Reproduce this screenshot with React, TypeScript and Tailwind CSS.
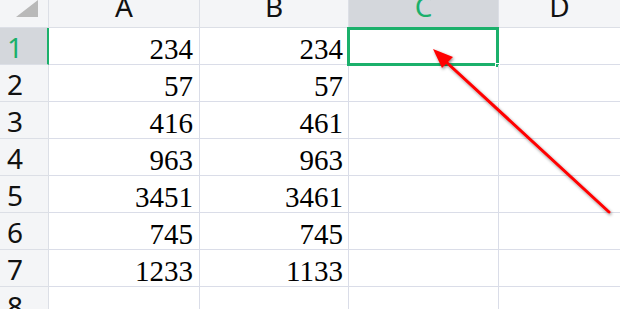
import React from "react";

const colA = ["234", "57", "416", "963", "3451", "745", "1233", ""];
const colB = ["234", "57", "461", "963", "3461", "745", "1133", ""];

const hdrFont = { fontFamily: '"Noto Sans", "Open Sans", sans-serif' };
const cellFont = { fontFamily: '"Liberation Serif", "DejaVu Serif", serif' };

export default function App() {
  return (
    <div className="relative w-[620px] h-[309px] overflow-hidden bg-white">
      <div className="grid grid-cols-[49px_151px_149px_150px_1fr] grid-rows-[28px_repeat(8,37px)]">
        {/* corner */}
        <div className="relative bg-[#f4f5f7] border-r border-b border-[#dcdfe6]">
          <svg className="absolute left-[16px] top-0" width="23" height="18" viewBox="0 0 23 18">
            <polygon points="0,17 22,17 22,0" fill="#b9b9b9" />
          </svg>
        </div>
        {["A", "B", "C", "D"].map((l) => (
          <div
            key={l}
            className={`flex items-end justify-center border-b border-[#dcdfe6] ${
              l === "C" ? "bg-[#d4d7dc] text-[#1bb06b]" : "bg-[#f4f5f7] text-[#111]"
            } ${l !== "D" ? "border-r" : ""}`}
            style={hdrFont}
          >
            <span className="text-[28px] leading-none mb-[7px]">{l}</span>
          </div>
        ))}
        {colA.map((a, i) => {
          const sel = i === 0;
          return (
            <React.Fragment key={i}>
              <div
                className={`flex items-start pl-[7px] border-b border-[#dcdfe6] ${
                  sel
                    ? "bg-[#d4d7dc] text-[#1bb06b] border-r-2 border-r-[#1bb06b]"
                    : "bg-[#f4f5f7] text-[#111] border-r border-r-[#dcdfe6]"
                }`}
                style={hdrFont}
              >
                <span className="text-[28px] leading-none mt-[5px]">{i + 1}</span>
              </div>
              <div
                className="flex items-start justify-end pr-[6px] border-r border-b border-[#dadde8] text-black"
                style={cellFont}
              >
                <span className="text-[29px] leading-none mt-[7px]">{a}</span>
              </div>
              <div
                className="flex items-start justify-end pr-[5px] border-r border-b border-[#dadde8] text-black"
                style={cellFont}
              >
                <span className="text-[29px] leading-none mt-[7px]">{colB[i]}</span>
              </div>
              <div className="relative border-r border-b border-[#dadde8]">
                {sel && (
                  <>
                    <div className="absolute left-[-2px] top-[-1px] w-[152px] h-[39px] border-[3px] border-[#1bb06b]" />
                    <div className="absolute left-[146px] top-[35px] w-[5px] h-[5px] bg-[#1bb06b] border border-white" />
                  </>
                )}
              </div>
              <div className="border-b border-[#dadde8]" />
            </React.Fragment>
          );
        })}
      </div>
      {/* arrow */}
      <svg className="absolute inset-0 pointer-events-none" width="620" height="309" viewBox="0 0 620 309">
        <defs>
          <filter id="sh" x="-20%" y="-20%" width="140%" height="140%">
            <feDropShadow dx="1" dy="1.5" stdDeviation="1.5" floodColor="#000" floodOpacity="0.45" />
          </filter>
        </defs>
        <g filter="url(#sh)">
          <line x1="609" y1="212" x2="444" y2="60" stroke="#ff0000" strokeWidth="3" strokeLinecap="round" />
          <polygon points="433,49 453,57 442,68" fill="#ff0000" />
        </g>
      </svg>
    </div>
  );
}
